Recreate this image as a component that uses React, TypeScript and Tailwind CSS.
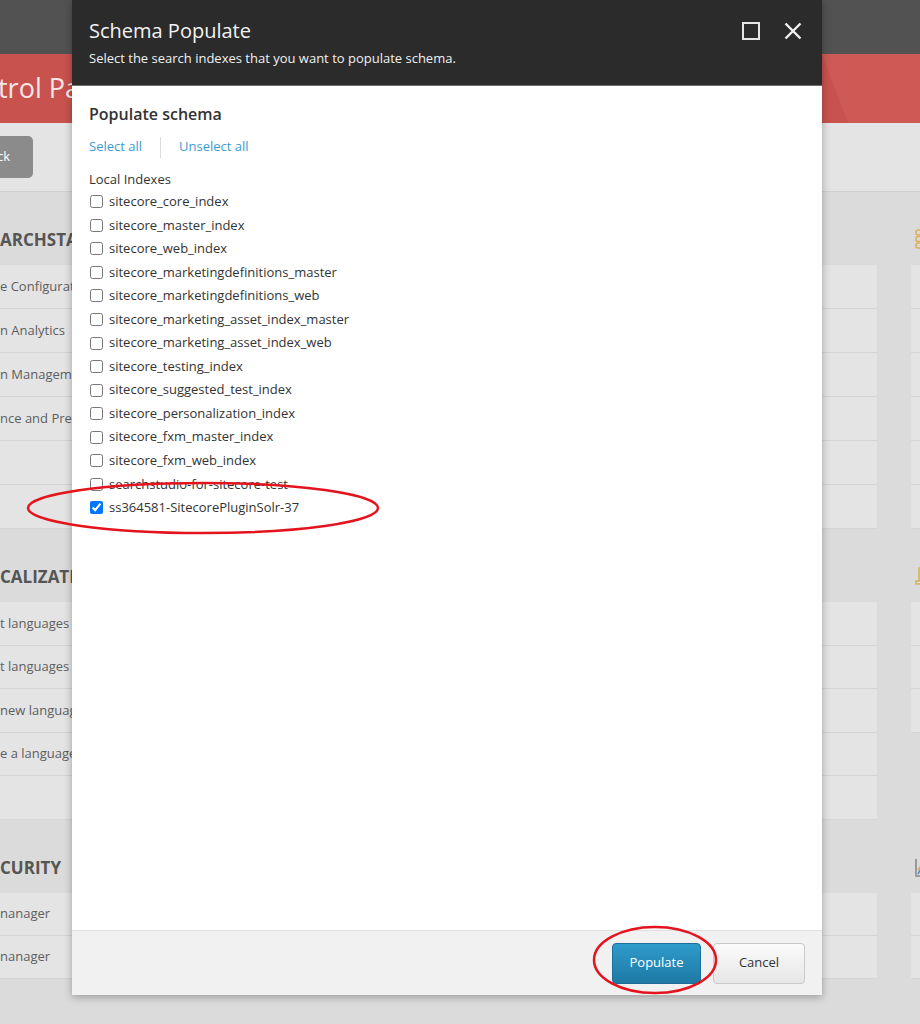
import * as React from 'react';

const indexes = [
  'sitecore_core_index',
  'sitecore_master_index',
  'sitecore_web_index',
  'sitecore_marketingdefinitions_master',
  'sitecore_marketingdefinitions_web',
  'sitecore_marketing_asset_index_master',
  'sitecore_marketing_asset_index_web',
  'sitecore_testing_index',
  'sitecore_suggested_test_index',
  'sitecore_personalization_index',
  'sitecore_fxm_master_index',
  'sitecore_fxm_web_index',
  'searchstudio-for-sitecore-test',
  'ss364581-SitecorePluginSolr-37',
];

function Section({ title, rows, rowH, icon }: { title: string; rows: string[]; rowH: string; icon?: React.ReactNode }) {
  return (
    <div>
      <div className="h-[73px] flex items-end pb-[13px]">
        {icon}
        <span className="text-[17px] leading-6 font-bold text-[#555] whitespace-nowrap">{title}</span>
      </div>
      {rows.map((r, i) => (
        <div
          key={i}
          className={`${rowH} bg-[#e4e4e4] border-b border-[#d5d5d5] flex items-center text-[13px] text-[#5e5e5e] whitespace-nowrap`}
        >
          {r}
        </div>
      ))}
    </div>
  );
}

function GoldIcon({ kind }: { kind: 'db' | 'bell' | 'chart' }) {
  return (
    <svg width="22" height="22" viewBox="0 0 22 22" className="ml-[4px] mr-2 mb-[2px] shrink-0" fill="none" strokeWidth="1.6">
      {kind === 'db' && (
        <g stroke="#d9b25a">
          <rect x="1" y="2" width="16" height="5" rx="2" />
          <rect x="1" y="8.5" width="16" height="5" rx="2" />
          <rect x="1" y="15" width="16" height="5" rx="2" />
        </g>
      )}
      {kind === 'bell' && (
        <g stroke="#d9b25a">
          <path d="M4 3h3v12H4z" />
          <path d="M1 16h12v3H1z" />
        </g>
      )}
      {kind === 'chart' && (
        <g>
          <path d="M1 3v17h18" stroke="#8a8a8a" />
          <path d="M3 18l4-7 4 3 4-8" stroke="#4d8fd6" />
          <path d="M3 14l4-5 4 2" stroke="#e0a940" />
        </g>
      )}
    </svg>
  );
}

export default function App() {
  return (
    <div className="relative w-[920px] h-[1024px] overflow-hidden bg-[#dbdbdb] font-['Open_Sans',sans-serif]">
      <div className="h-[54px] bg-[#525252]" />
      <div className="relative h-[69px] bg-[#c8524e] flex items-center overflow-hidden">
        <svg className="absolute inset-0" width="920" height="69" viewBox="0 0 920 69">
          <polygon points="822,0 920,0 920,69 848,69" fill="#cd5a55" />
        </svg>
        <span className="relative text-[27px] text-[#f6e6e5] -ml-[2px]">trol Panel</span>
      </div>
      <div className="h-[69px] bg-[#e4e4e4] border-b border-[#cfcfcf] flex items-center">
        <div className="h-[42px] w-[64px] -ml-[31px] bg-[#8b8b8b] rounded-[5px] flex items-center justify-end pr-[23px] text-[13px] text-white">
          Back
        </div>
      </div>

      <div className="flex gap-[34px]">
        <div className="w-[877px] shrink-0">
          <Section title="ARCHSTAX" rowH="h-[44px]" rows={['e Configuration', 'n Analytics', 'n Management', 'nce and Preferences', '', '']} />
          <Section title="CALIZATION" rowH="h-[43.6px]" rows={['t languages', 't languages', 'new language', 'e a language', '']} />
          <Section title="CURITY" rowH="h-[43px]" rows={['nanager', 'nanager']} />
        </div>
        <div className="w-[200px] shrink-0">
          <Section title="" icon={<GoldIcon kind="db" />} rowH="h-[44px]" rows={['', '', '', '', '', '']} />
          <div className="h-[73px] flex items-end pb-[13px]">
            <GoldIcon kind="bell" />
          </div>
          <div className="h-[218px]">
            {[0, 1, 2].map((i) => (
              <div key={i} className="h-[43.6px] bg-[#e4e4e4] border-b border-[#d5d5d5]" />
            ))}
          </div>
          <Section title="" icon={<GoldIcon kind="chart" />} rowH="h-[43px]" rows={['', '']} />
        </div>
      </div>

      {/* modal */}
      <div className="absolute left-[72px] top-0 w-[750px] h-[995px] flex flex-col bg-white shadow-[0_2px_8px_rgba(0,0,0,0.3)]">
        <div className="h-[86px] bg-[#2b2b2b] border-b border-[#6f6f6f] flex items-start justify-between px-[17px]">
          <div className="pt-[17px]">
            <div className="text-[20px] leading-[28px] text-[#f2f2f2]">Schema Populate</div>
            <div className="text-[13px] leading-[18px] mt-[4px] text-[#f0f0f0]">
              Select the search indexes that you want to populate schema.
            </div>
          </div>
          <div className="flex items-center gap-[24px] pt-[22px] pr-[3px]">
            <svg width="18" height="18" viewBox="0 0 18 18">
              <rect x="1" y="1" width="16" height="16" fill="none" stroke="#e6e6e6" strokeWidth="2" />
            </svg>
            <svg width="18" height="18" viewBox="0 0 18 18">
              <path d="M1.5 1.5L16.5 16.5M16.5 1.5L1.5 16.5" stroke="#f2f2f2" strokeWidth="2.4" />
            </svg>
          </div>
        </div>

        <div className="flex-1 px-[17px] pt-[16px] text-[#333]">
          <div className="text-[16px] leading-6 font-semibold text-[#333]">Populate schema</div>
          <div className="mt-[11px] flex items-center h-[20px] text-[13px] text-[#3a9bd0]">
            <span>Select all</span>
            <span className="mx-[18px] w-px h-[21px] bg-[#dcdcdc]" />
            <span>Unselect all</span>
          </div>
          <div className="mt-[12px] text-[13px] leading-5 text-[#333]">Local Indexes</div>
          <div className="mt-[1px]">
            {indexes.map((name, i) => (
              <label key={name} className="h-[23.55px] flex items-center gap-[6px] text-[13px] text-[#333] whitespace-nowrap">
                <input
                  type="checkbox"
                  defaultChecked={i === indexes.length - 1}
                  className="w-[13px] h-[13px] m-0 ml-[1px]"
                />
                <span>{name}</span>
              </label>
            ))}
          </div>
        </div>

        <div className="h-[65px] bg-[#f1f1f1] border-t border-[#e0e0e0] flex items-center justify-end gap-[12px] pr-[17px]">
          <button className="w-[89px] h-[41px] rounded-[4px] border border-[#1c6f98] bg-gradient-to-b from-[#2f9bcb] to-[#1e79a5] text-white text-[13px]">
            Populate
          </button>
          <button className="w-[92px] h-[41px] rounded-[4px] border border-[#c9c9c9] bg-gradient-to-b from-[#fbfbfb] to-[#e6e6e6] text-[#333] text-[13px]">
            Cancel
          </button>
        </div>
      </div>

      {/* annotations */}
      <svg className="absolute inset-0 pointer-events-none" width="920" height="1024" viewBox="0 0 920 1024">
        <ellipse cx="203" cy="508" rx="175" ry="25" fill="none" stroke="#e3141e" strokeWidth="2.5" />
        <ellipse cx="655" cy="960" rx="61" ry="33" fill="none" stroke="#e3141e" strokeWidth="2.5" />
      </svg>
    </div>
  );
}
